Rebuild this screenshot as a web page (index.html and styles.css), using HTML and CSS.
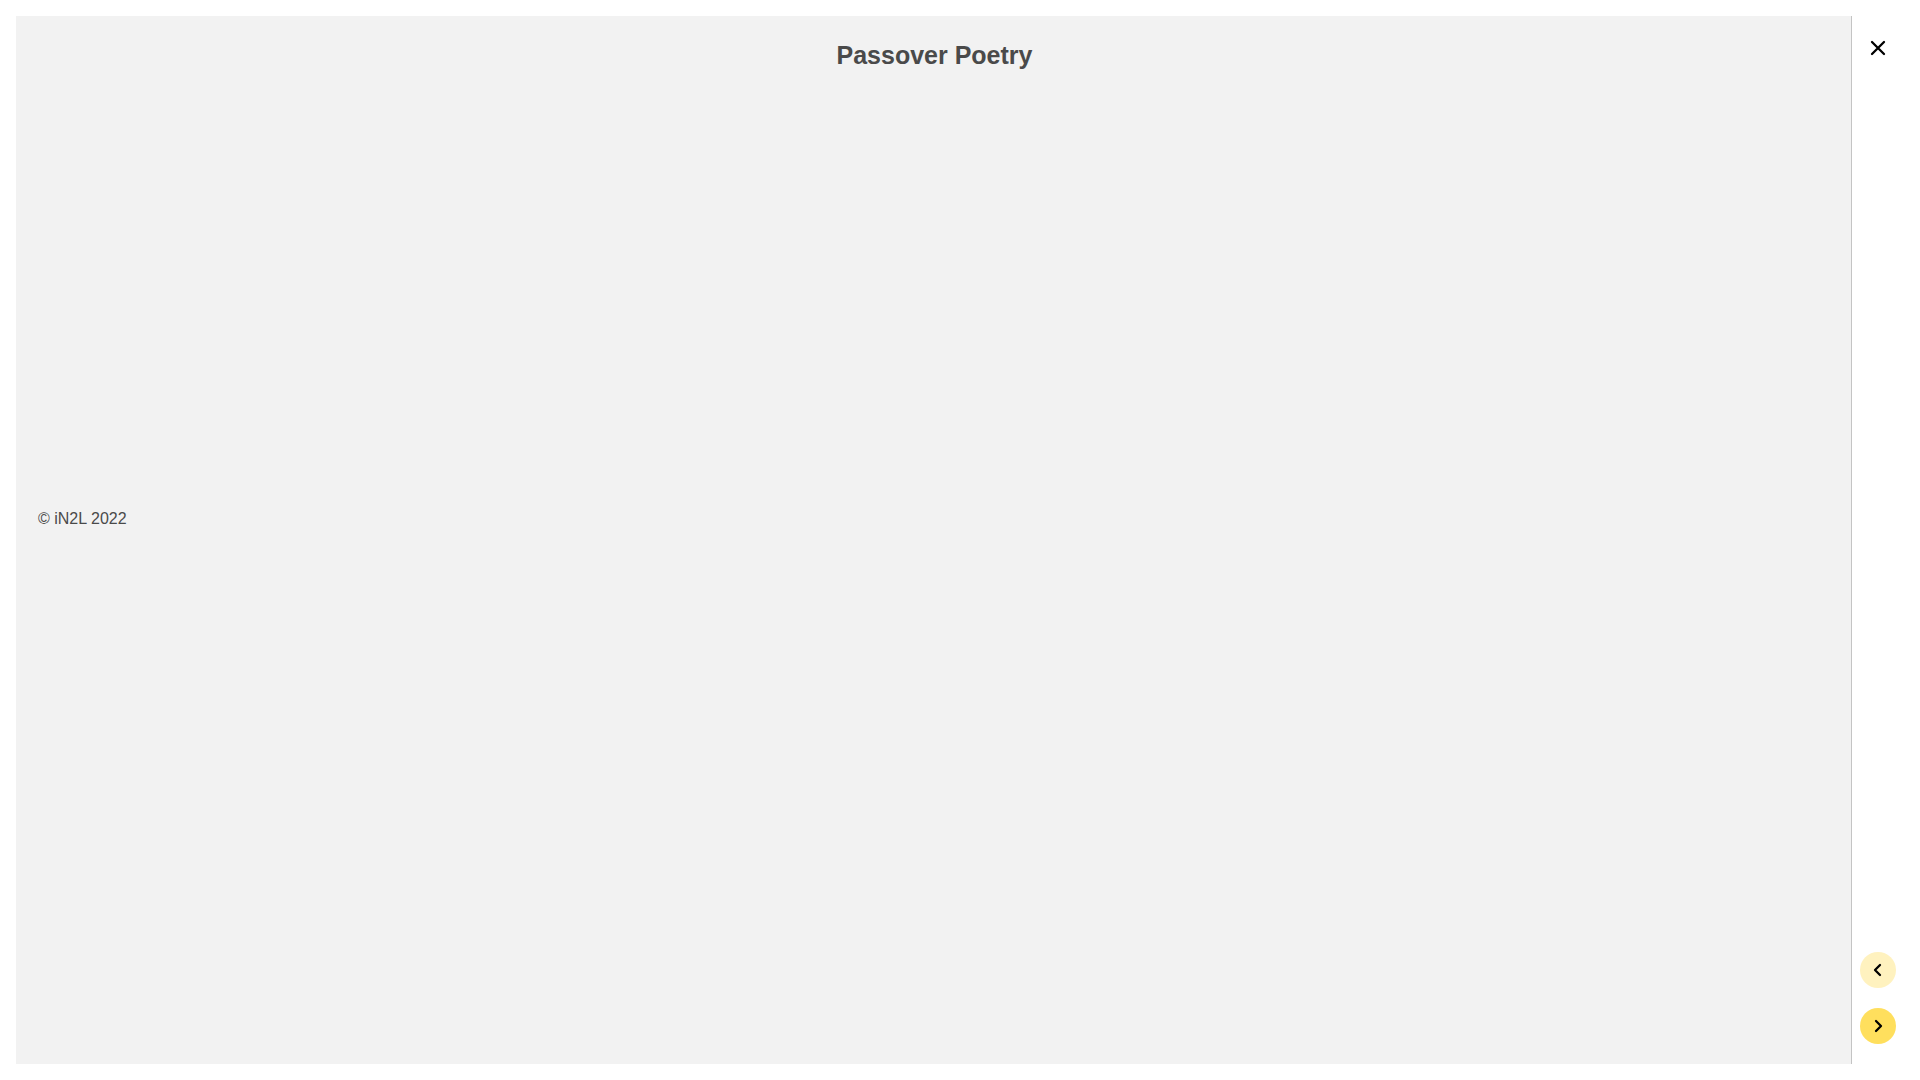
FILE: index.html
```html
<!DOCTYPE html>
<html lang="en">
<head>
<meta charset="utf-8">
<title>Passover Poetry</title>
<link rel="stylesheet" href="styles.css">
</head>
<body>

<div class="viewer">

	<main class="page">
		<h1>Passover Poetry</h1>
		<p class="copyright">&copy; iN2L 2022</p>
	</main>

	<nav class="controls">
		<button type="button" class="close" aria-label="Close">
			<svg viewBox="0 0 24 24"><path d="M6 6l12 12M18 6L6 18"/></svg>
		</button>
		<button type="button" class="arrow" aria-label="Previous page" disabled>
			<svg viewBox="0 0 24 24"><path d="M14 7l-5 5 5 5"/></svg>
		</button>
		<button type="button" class="arrow" aria-label="Next page">
			<svg viewBox="0 0 24 24"><path d="M10 7l5 5-5 5"/></svg>
		</button>
	</nav>

</div>

</body>
</html>
```

FILE: styles.css
```css
body {
	margin: 0;
	background: #fff;
	color: #4a4a4a;
	font: 16px/24px "Liberation Sans", Arial, sans-serif;
}

.viewer {
	display: flex;
	box-sizing: border-box;
	height: 100vh;
	padding: 16px 0 16px 16px;
}

.page {
	display: grid;
	grid-template-rows: 1fr auto 1fr;
	flex: 1;
	padding: 0 20px 42px 22px;
	border-right: 1px solid #c4c4c4;
	background: #f2f2f2;
}

h1 {
	margin: 24px 0 0;
	font-size: 25px;
	line-height: 30px;
	text-align: center;
}

.copyright {
	margin: 0;
}

.controls {
	display: flex;
	flex-direction: column;
	gap: 20px;
	padding: 14px 24px 20px 8px;
}

button {
	display: flex;
	align-items: center;
	justify-content: center;
	width: 36px;
	height: 36px;
	padding: 0;
	border: 0;
	border-radius: 50%;
	cursor: pointer;
}

svg {
	width: 24px;
	fill: none;
	stroke: #000;
	stroke-width: 2.3;
	stroke-linecap: round;
	stroke-linejoin: round;
}

.close {
	margin-bottom: auto;
	background: none;
}

.arrow {
	background: #ffdf5d;
}

.arrow:disabled {
	background: #fff2bf;
	cursor: default;
}
```
